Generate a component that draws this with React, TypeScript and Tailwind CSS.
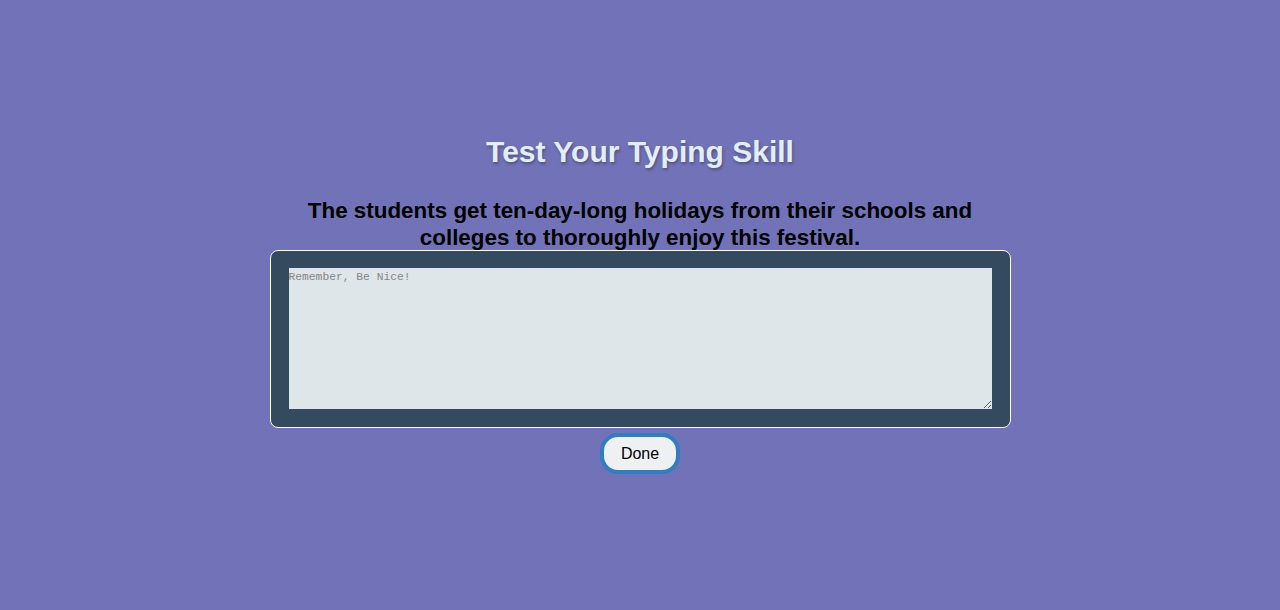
export default function App() {
  return (
    <div className="min-h-[610px] w-full bg-[#7272b8] font-['Liberation_Sans',Arial,sans-serif] flex flex-col items-center pt-[135px]">
      <h1 className="text-[30px] leading-[34px] font-bold text-[#e2eefc] [text-shadow:1px_2px_3px_rgba(60,60,90,0.6)]">
        Test Your Typing Skill
      </h1>
      <p className="mt-[28px] w-[700px] text-center text-[22.4px] leading-[27px] font-bold text-black">
        The students get ten-day-long holidays from their schools and colleges to thoroughly enjoy this festival.
      </p>
      <div className="-mt-[1px] w-[741px] h-[178px] rounded-[8px] border border-white bg-[#334a5f] p-[17px_18px]">
        <textarea
          placeholder="Remember, Be Nice!"
          className="block w-full h-[141px] bg-[#dfe6e9] text-[11.3px] font-['Liberation_Mono',monospace] text-black placeholder:text-[#858585] outline-none resize-y p-0 pt-[1px]"
        />
      </div>
      <button className="mt-[5px] w-[80px] h-[41px] rounded-[18px] border-4 border-[#2f7ec0] bg-[#eef0f2] text-[16px] text-black">
        Done
      </button>
    </div>
  );
}
